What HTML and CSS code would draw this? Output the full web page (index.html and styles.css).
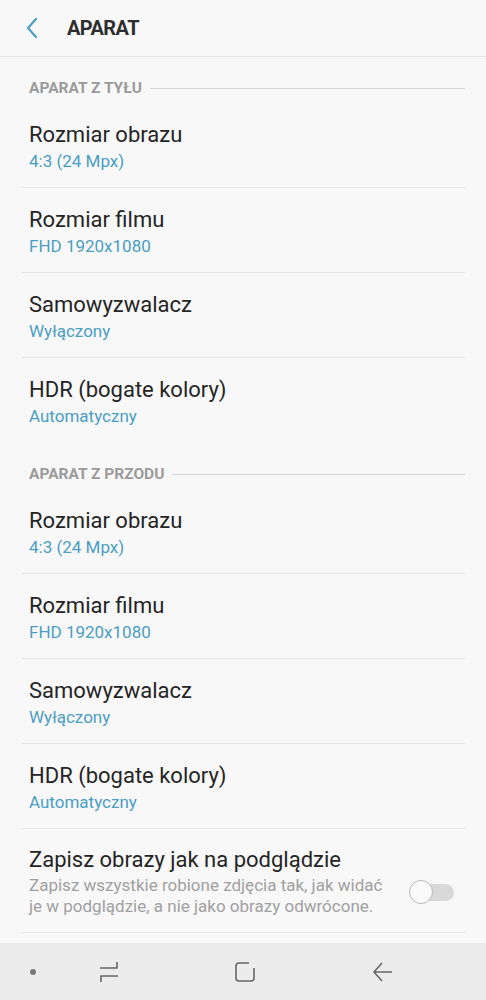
FILE: index.html
```html
<!DOCTYPE html>
<html lang="pl">
<head>
    <meta charset="UTF-8">
    <meta name="viewport" content="width=device-width, initial-scale=1.0">
    <title>Aparat</title>
    <link rel="stylesheet" href="styles.css">
</head>
<body>
    <header class="top-bar">
        <svg class="back" width="14" height="22" viewBox="0 0 14 22">
            <path d="M11 2 L3 11 L11 20" fill="none" stroke="#4b9ec3" stroke-width="2.2" stroke-linecap="round" stroke-linejoin="round"/>
        </svg>
        <h1>APARAT</h1>
    </header>

    <main class="list">
        <div class="section-title"><span>APARAT Z TYŁU</span></div>
        <div class="item">
            <div class="item-title">Rozmiar obrazu</div>
            <div class="item-value">4:3 (24 Mpx)</div>
        </div>
        <div class="item">
            <div class="item-title">Rozmiar filmu</div>
            <div class="item-value">FHD 1920x1080</div>
        </div>
        <div class="item">
            <div class="item-title">Samowyzwalacz</div>
            <div class="item-value">Wyłączony</div>
        </div>
        <div class="item last">
            <div class="item-title">HDR (bogate kolory)</div>
            <div class="item-value">Automatyczny</div>
        </div>

        <div class="section-title"><span>APARAT Z PRZODU</span></div>
        <div class="item">
            <div class="item-title">Rozmiar obrazu</div>
            <div class="item-value">4:3 (24 Mpx)</div>
        </div>
        <div class="item">
            <div class="item-title">Rozmiar filmu</div>
            <div class="item-value">FHD 1920x1080</div>
        </div>
        <div class="item">
            <div class="item-title">Samowyzwalacz</div>
            <div class="item-value">Wyłączony</div>
        </div>
        <div class="item">
            <div class="item-title">HDR (bogate kolory)</div>
            <div class="item-value">Automatyczny</div>
        </div>
        <div class="item switch-item">
            <div class="item-text">
                <div class="item-title">Zapisz obrazy jak na podglądzie</div>
                <div class="item-desc">Zapisz wszystkie robione zdjęcia tak, jak widać je w podglądzie, a nie jako obrazy odwrócone.</div>
            </div>
            <div class="toggle"><span class="thumb"></span></div>
        </div>
    </main>

    <nav class="nav-bar">
        <span class="dot"></span>
        <svg width="22" height="26" viewBox="0 0 22 26">
            <path d="M2 9 H19 V3 M20 17 H3 V23" fill="none" stroke="#666" stroke-width="1.6"/>
        </svg>
        <svg width="22" height="22" viewBox="0 0 22 22">
            <path d="M15 2 H5 Q2 2 2 5 V17 Q2 20 5 20 H17 Q20 20 20 17 V7" fill="none" stroke="#666" stroke-width="1.6"/>
        </svg>
        <svg width="22" height="22" viewBox="0 0 22 22">
            <path d="M10 2 L2 11 L10 20 M2 11 H20" fill="none" stroke="#666" stroke-width="1.6"/>
        </svg>
    </nav>
</body>
</html>
```

FILE: styles.css
```css
body {
    margin: 0;
    background: #f8f8f8;
    font-family: Roboto, "Noto Sans", sans-serif;
    color: #252525;
}
.top-bar {
    height: 56px;
    display: flex;
    align-items: center;
    border-bottom: 1px solid #e4e4e4;
}
.top-bar .back {
    margin-left: 25px;
    margin-right: 28px;
}
.top-bar h1 {
    margin: 0;
    font-size: 20px;
    font-weight: 700;
    color: #2e2e2e;
    letter-spacing: -0.6px;
}
.list {
    padding: 0 21px 0 22px;
}
.section-title {
    display: flex;
    align-items: center;
    padding: 21px 0 5px 7px;
    line-height: 20px;
    font-size: 15.5px;
    font-weight: 700;
    color: #9b9b9b;
}
.section-title::after {
    content: '';
    flex: 1;
    height: 1px;
    background: #d6d6d6;
    margin-left: 8px;
}
.item {
    padding: 19px 0 13px 7px;
    border-bottom: 1px solid #e6e6e6;
}
.item.last {
    border-bottom: none;
    padding-bottom: 14px;
}
.item-title {
    font-size: 22px;
    line-height: 26px;
}
.item-value {
    font-size: 17px;
    line-height: 26px;
    color: #4b9ec3;
}
.switch-item {
    display: flex;
    align-items: center;
    padding-top: 18px;
    padding-bottom: 15px;
}
.item-text {
    flex: 1;
}
.item-desc {
    font-size: 17px;
    line-height: 21px;
    color: #a0a0a0;
    padding-top: 2px;
    padding-right: 22px;
}
.toggle {
    position: relative;
    width: 42px;
    height: 17px;
    border-radius: 9px;
    background: #d9d9d9;
    margin-right: 11px;
    margin-top: 20px;
}
.toggle .thumb {
    position: absolute;
    left: -3px;
    top: -4px;
    width: 22px;
    height: 22px;
    border-radius: 50%;
    background: #fafafa;
    border: 1px solid #b8b8b8;
}
.nav-bar {
    position: fixed;
    left: 0;
    bottom: 0;
    width: 100%;
    height: 57px;
    background: #ececec;
    display: flex;
    align-items: center;
}
.nav-bar .dot {
    width: 6px;
    height: 6px;
    border-radius: 50%;
    background: #777;
    margin-left: 30px;
    margin-right: 62px;
}
.nav-bar svg:nth-of-type(2) {
    margin-left: 114px;
}
.nav-bar svg:nth-of-type(3) {
    margin-left: 116px;
}
```
